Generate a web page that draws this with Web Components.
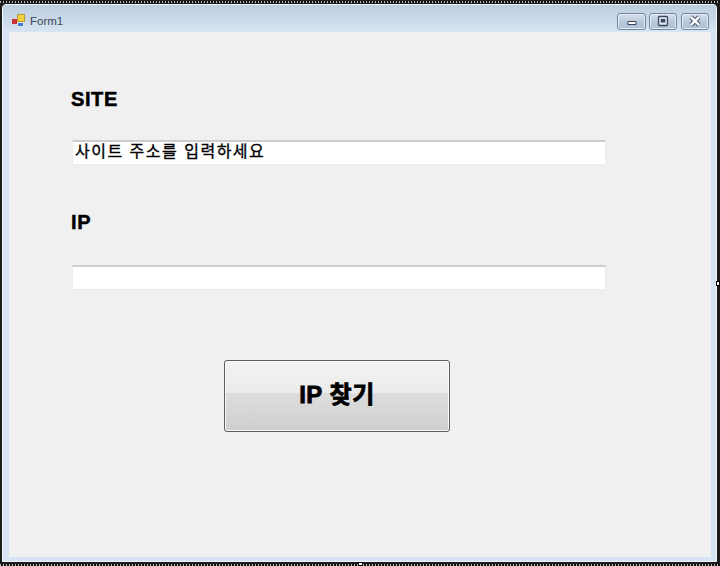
<!DOCTYPE html>
<html>
<head>
<meta charset="utf-8">
<title>Form1</title>
<style>
  html, body { margin: 0; height: 100%; background: #1c1c1c; }
  body { overflow: hidden; }
</style>
</head>
<body>
<win-form caption="Form1">
  <win-label style="margin-top:53px">SITE</win-label>
  <win-textbox value="사이트 주소를 입력하세요" style="margin-top:27px"></win-textbox>
  <win-label style="margin-top:43px">IP</win-label>
  <win-textbox style="margin-top:29px"></win-textbox>
  <win-button style="margin-top:70px">IP 찾기</win-button>
</win-form>

<script>
class WinCaptionButton extends HTMLElement {
  constructor() {
    super();
    this._root = this.attachShadow({mode: 'open'});
  }
  connectedCallback() {
    const icons = {
      min: '<rect x="10.5" y="7.5" width="9" height="3" rx="1" fill="#fff" stroke="#39455a" stroke-width="1.2"/>',
      max: '<rect x="9.5" y="2.5" width="10" height="9" rx="1" fill="#dfe8f2" stroke="#39455a" stroke-width="1.4"/><rect x="12" y="5" width="5" height="3.5" fill="#39455a"/>',
      close: '<path d="M10 3 L19 11 M19 3 L10 11" stroke="#39455a" stroke-width="4.6"/><path d="M10 3 L19 11 M19 3 L10 11" stroke="#fff" stroke-width="2.8"/>'
    };
    this._root.innerHTML = `
      <style>
        :host {
          display: block;
          width: 26px;
          height: 15px;
          border: 1px solid #75859b;
          border-radius: 3px;
          background: linear-gradient(#d5e0ec, #b9c9dc 50%, #aebfd4);
          box-shadow: inset 0 0 0 1px #e3ebf4;
        }
        svg { display: block; width: 100%; height: 15px; }
      </style>
      <svg viewBox="0 0 29 15" preserveAspectRatio="none">${icons[this.getAttribute('kind')]}</svg>
    `;
  }
}

class WinTitlebar extends HTMLElement {
  constructor() {
    super();
    this._root = this.attachShadow({mode: 'open'});
  }
  connectedCallback() {
    this._root.innerHTML = `
      <style>
        :host {
          display: flex;
          align-items: flex-start;
          height: 27px;
          flex: none;
          background: linear-gradient(#bdcfe0, #cbdaea 60%, #d8e5f3);
        }
        .icon { margin: 9px 0 0 9px; width: 13px; height: 13px; flex: none; }
        .text {
          margin: 8px 0 0 5px;
          font: 11.5px "Liberation Sans", Arial, sans-serif;
          line-height: 16px;
          color: #3b4754;
        }
        .buttons {
          margin: 8px 7px 0 auto;
          display: flex;
          gap: 4px;
        }
        win-caption-button:first-child { width: 27px; margin-right: -1px; }
      </style>
      <svg class="icon" viewBox="0 0 13 13" shape-rendering="crispEdges">
        <rect x="0" y="4" width="5" height="7" fill="#d8d8d8"/>
        <rect x="0" y="5" width="5" height="5" fill="#c8323a"/>
        <rect x="5" y="0" width="8" height="8" fill="#b89a30"/>
        <rect x="6" y="1" width="6" height="6" fill="#f6d03c"/>
        <rect x="5" y="8" width="7" height="5" fill="#dbe4ee"/>
        <rect x="6" y="9" width="5" height="3" fill="#3f7fd0"/>
      </svg>
      <div class="text"><slot></slot></div>
      <div class="buttons">
        <win-caption-button kind="min"></win-caption-button>
        <win-caption-button kind="max"></win-caption-button>
        <win-caption-button kind="close"></win-caption-button>
      </div>
    `;
  }
}

class WinForm extends HTMLElement {
  constructor() {
    super();
    this._root = this.attachShadow({mode: 'open'});
  }
  connectedCallback() {
    this._root.innerHTML = `
      <style>
        :host {
          display: block;
          position: relative;
          box-sizing: border-box;
          height: 566px;
          padding: 4px 3px 4px 2px;
        }
        .dots {
          position: absolute;
          left: 0;
          right: 0;
          height: 2px;
          background: repeating-linear-gradient(90deg, #bbb 0 1px, #111 1px 3px);
        }
        .dots.top { top: 1px; }
        .dots.bottom { bottom: 0; }
        .frame {
          box-sizing: border-box;
          height: 100%;
          display: flex;
          flex-direction: column;
          border: 1px solid #f4f7fb;
          border-radius: 4px 4px 0 0;
          background: #d6e4f3;
        }
        .client {
          flex: 1;
          margin: 0 5px 4px 6px;
          padding: 0 0 0 62px;
          background: #f0f0f0;
        }
        .handle {
          position: absolute;
          box-sizing: border-box;
          background: #fff;
          border: 1px solid #000;
        }
        .handle.right { right: 0; top: 281px; width: 4px; height: 5px; }
        .handle.low { left: 358px; bottom: 0; width: 5px; height: 4px; }
      </style>
      <div class="dots top"></div>
      <div class="dots bottom"></div>
      <div class="frame">
        <win-titlebar>${this.getAttribute('caption')}</win-titlebar>
        <div class="client"><slot></slot></div>
      </div>
      <div class="handle right"></div>
      <div class="handle low"></div>
    `;
  }
}

class WinLabel extends HTMLElement {
  constructor() {
    super();
    this._root = this.attachShadow({mode: 'open'});
  }
  connectedCallback() {
    this._root.innerHTML = `
      <style>
        :host {
          display: block;
          font: bold 20px/28px "Liberation Sans", Arial, sans-serif;
          letter-spacing: 0.6px;
          color: #000;
          -webkit-text-stroke: 0.5px #000;
        }
      </style>
      <slot></slot>
    `;
  }
}

class WinTextbox extends HTMLElement {
  constructor() {
    super();
    this._root = this.attachShadow({mode: 'open'});
  }
  connectedCallback() {
    this._root.innerHTML = `
      <style>
        :host {
          display: block;
          box-sizing: border-box;
          width: 534px;
          height: 25px;
          margin-left: 1px;
          padding: 0 2px;
          background: #fff;
          border: 1px solid #ebebeb;
          border-top: 2px solid #cdcdcd;
          border-radius: 1px;
          font: 16px/19px "Liberation Sans", "Noto Sans CJK KR", sans-serif;
          letter-spacing: 1.5px;
          -webkit-text-stroke: 0.35px #000;
          color: #000;
          white-space: nowrap;
          overflow: hidden;
        }
      </style>
      <span>${this.getAttribute('value') || ''}</span>
    `;
  }
}

class WinButton extends HTMLElement {
  constructor() {
    super();
    this._root = this.attachShadow({mode: 'open'});
  }
  connectedCallback() {
    this._root.innerHTML = `
      <style>
        :host {
          display: flex;
          align-items: center;
          justify-content: center;
          box-sizing: border-box;
          width: 226px;
          height: 72px;
          margin-left: 153px;
          padding-bottom: 7px;
          border: 1px solid #5e5e5e;
          border-radius: 3px;
          background: linear-gradient(#f2f2f2, #ebebeb 45%, #dddddd 46%, #cfcfcf);
          box-shadow: inset 0 0 0 1px #f7f7f7;
          font: bold 24px "Liberation Sans", "Noto Sans CJK KR", sans-serif;
          letter-spacing: 0.5px;
          -webkit-text-stroke: 0.8px #000;
          color: #000;
        }
      </style>
      <slot></slot>
    `;
  }
}

customElements.define('win-caption-button', WinCaptionButton);
customElements.define('win-titlebar', WinTitlebar);
customElements.define('win-form', WinForm);
customElements.define('win-label', WinLabel);
customElements.define('win-textbox', WinTextbox);
customElements.define('win-button', WinButton);
</script>
</body>
</html>
